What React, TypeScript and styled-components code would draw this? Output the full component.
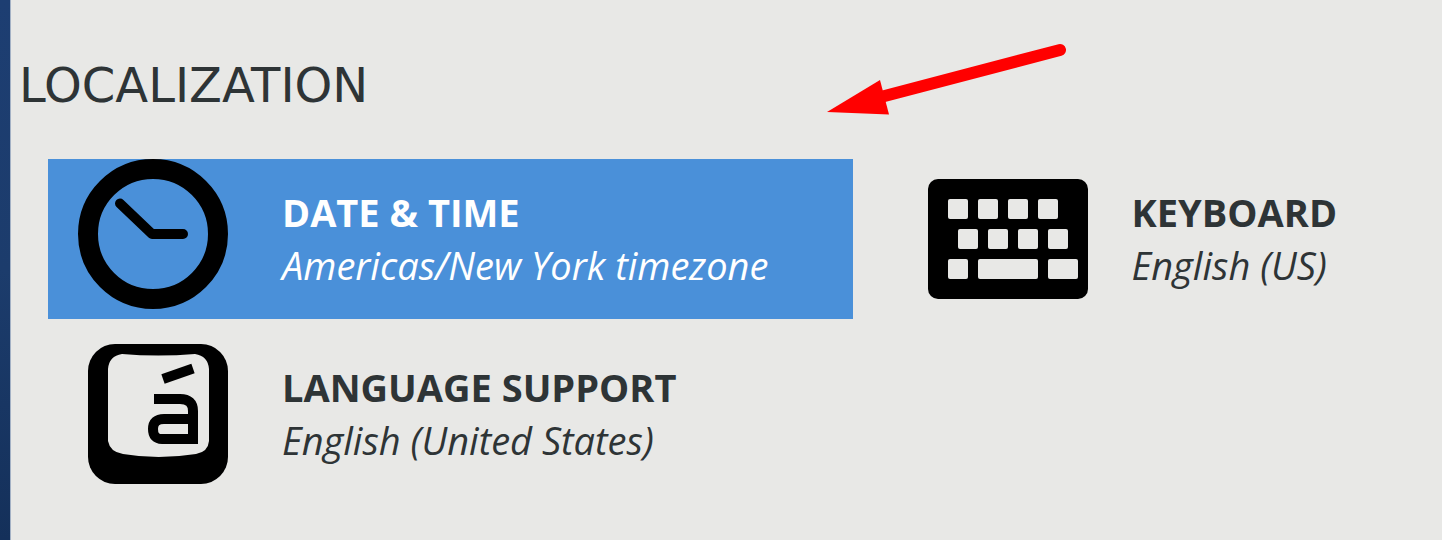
import React from "react";
import styled, { createGlobalStyle } from "styled-components";

const GlobalStyle = createGlobalStyle`
  * { box-sizing: border-box; }
  body { margin: 0; background: #e8e8e6; }
`;

const Screen = styled.div`
  display: flex;
  min-height: 100vh;
  background: #e8e8e6;
  color: #2e3436;
`;

const Sidebar = styled.div`
  flex: 0 0 11px;
  background: linear-gradient(#1d3e72, #1c3c6c 50%, #14305a);
  border-right: 1px solid #a3b1c5;
`;

const Panel = styled.main`
  position: relative;
  flex: 1;
  min-width: 0;
  padding: 57px 8px 40px;
`;

const Heading = styled.h1`
  margin: 0;
  font: 400 48px/56px "DejaVu Sans", sans-serif;
`;

const SpokeGrid = styled.div`
  display: grid;
  grid-template-columns: 3fr 2fr;
  gap: 15px 45px;
  margin: 46px 0 0 29px;
`;

const Spoke = styled.button<{ $selected?: boolean }>`
  display: flex;
  align-items: center;
  gap: 44px;
  min-width: 0;
  height: 160px;
  padding: 0 0 0 30px;
  border: 0;
  text-align: left;
  white-space: nowrap;
  background: ${(p) => (p.$selected ? "#4a90d9" : "transparent")};
  color: ${(p) => (p.$selected ? "#ffffff" : "#2e3436")};
`;

const Icon = styled.svg`
  flex: none;
  width: 160px;
  height: 160px;
  color: #000000;
`;

const Labels = styled.span`
  display: flex;
  flex-direction: column;
  font-family: "Open Sans", "Noto Sans", sans-serif;
  font-size: 38px;
  line-height: 53px;
`;

const Title = styled.span`
  font-weight: 700;
`;

const Status = styled.span`
  font-style: italic;
  font-weight: 400;
`;

const Arrow = styled.svg`
  position: absolute;
  top: 40px;
  left: 57%;
  width: 250px;
  height: 80px;
`;

const ClockIcon = () => (
  <Icon viewBox="0 0 160 160" aria-hidden="true">
    <circle cx="75" cy="75" r="65" fill="none" stroke="currentColor" strokeWidth="20" />
    <path d="M42 44.500 74 75H105" fill="none" stroke="currentColor" strokeWidth="10" strokeLinecap="round" strokeLinejoin="round" />
  </Icon>
);

const keys = [
  [20, 20, 20], [50, 20, 20], [80, 20, 20], [110, 20, 20],
  [30, 50, 20], [60, 50, 20], [90, 50, 20], [120, 50, 20],
  [20, 80, 20], [50, 80, 60], [120, 80, 30],
];

const KeyboardIcon = () => (
  <Icon viewBox="0 0 160 160" aria-hidden="true">
    <rect y="20" width="160" height="120" rx="10" fill="currentColor" />
    {keys.map(([x, y, w]) => (
      <rect key={`${x}-${y}`} x={x} y={y + 20} width={w} height="20" rx="2" fill="#e8e8e6" />
    ))}
  </Icon>
);

const LanguageIcon = () => (
  <Icon viewBox="0 0 160 160" aria-hidden="true">
    <rect x="10" y="10" width="140" height="140" rx="27" fill="currentColor" />
    <path
      d="M44 20Q80 23 117 20Q130 22 131 35V107Q130 118 118 120Q80 126 45 120Q32 118 30 107V35Q31 22 44 20Z"
      fill="#e8e8e6"
    />
    <path d="M85 45 115 34.500" fill="none" stroke="currentColor" strokeWidth="10" />
    <path d="M76 65H102Q115 65 115 77V105H84Q75 105 75 95Q75 85 86 85H115" fill="none" stroke="currentColor" strokeWidth="10" />
  </Icon>
);

const spokes = [
  { title: "DATE & TIME", status: "Americas/New York timezone", icon: ClockIcon, selected: true },
  { title: "KEYBOARD", status: "English (US)", icon: KeyboardIcon },
  { title: "LANGUAGE SUPPORT", status: "English (United States)", icon: LanguageIcon },
];

export default function App() {
  return (
    <>
      <GlobalStyle />
      <Screen>
        <Sidebar />
        <Panel>
          <Heading>LOCALIZATION</Heading>
          <SpokeGrid>
            {spokes.map(({ title, status, icon: SpokeIcon, selected }) => (
              <Spoke key={title} type="button" $selected={selected}>
                <SpokeIcon />
                <Labels>
                  <Title>{title}</Title>
                  <Status>{status}</Status>
                </Labels>
              </Spoke>
            ))}
          </SpokeGrid>
          <Arrow viewBox="0 0 250 80" aria-hidden="true">
            <path d="M233 10 50 58" stroke="#ff0000" strokeWidth="12" strokeLinecap="round" />
            <path d="M0 72 53 40 62 74.500Z" fill="#ff0000" />
          </Arrow>
        </Panel>
      </Screen>
    </>
  );
}
